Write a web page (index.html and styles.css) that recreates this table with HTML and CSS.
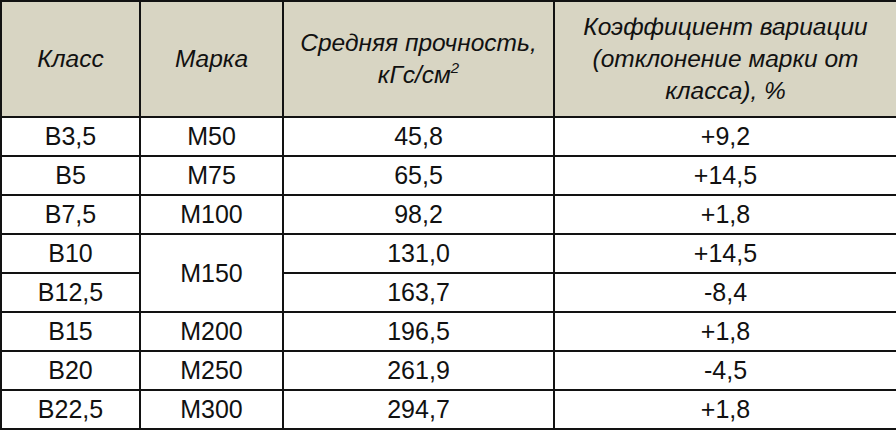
FILE: index.html
```html
<!DOCTYPE html>
<html lang="ru">
<head>
<meta charset="utf-8">
<link rel="stylesheet" href="styles.css">
</head>
<body>
<table class="grid">
  <colgroup>
    <col class="c1"><col class="c2"><col class="c3"><col class="c4">
  </colgroup>
  <thead>
    <tr>
      <th>Класс</th>
      <th>Марка</th>
      <th>Средняя прочность,<br>кГс/см<sup>2</sup></th>
      <th>Коэффициент вариации<br>(отклонение марки от<br>класса), %</th>
    </tr>
  </thead>
  <tbody>
    <tr><td>B3,5</td><td>M50</td><td>45,8</td><td>+9,2</td></tr>
    <tr><td>B5</td><td>M75</td><td>65,5</td><td>+14,5</td></tr>
    <tr><td>B7,5</td><td>M100</td><td>98,2</td><td>+1,8</td></tr>
    <tr><td>B10</td><td rowspan="2">M150</td><td>131,0</td><td>+14,5</td></tr>
    <tr><td>B12,5</td><td>163,7</td><td>-8,4</td></tr>
    <tr><td>B15</td><td>M200</td><td>196,5</td><td>+1,8</td></tr>
    <tr><td>B20</td><td>M250</td><td>261,9</td><td>-4,5</td></tr>
    <tr><td>B22,5</td><td>M300</td><td>294,7</td><td>+1,8</td></tr>
    <tr class="next"><td></td><td></td><td></td><td></td></tr>
  </tbody>
</table>
</body>
</html>
```
FILE: styles.css
```css
html, body {
  margin: 0;
  padding: 0;
  background: #ffffff;
  overflow: hidden;
}
body {
  width: 896px;
  height: 430px;
  font-family: "Liberation Sans", Arial, sans-serif;
  color: #111111;
}
.grid {
  border-collapse: collapse;
  width: 896px;
  table-layout: fixed;
}
.c1 { width: 139px; }
.c2 { width: 143px; }
.c3 { width: 271px; }
.c4 { width: 343px; }
.grid th, .grid td {
  border: 2px solid #121212;
  text-align: center;
  vertical-align: middle;
  padding: 0;
}
.grid th {
  background: #d8d5c3;
  font-weight: normal;
  font-style: italic;
  font-size: 24.5px;
  line-height: 32px;
  height: 114px;
}
.grid th sup {
  font-size: 15px;
  line-height: 0;
  vertical-align: 10px;
}
.grid td {
  font-size: 25px;
  height: 37px;
  line-height: 37px;
}
```
